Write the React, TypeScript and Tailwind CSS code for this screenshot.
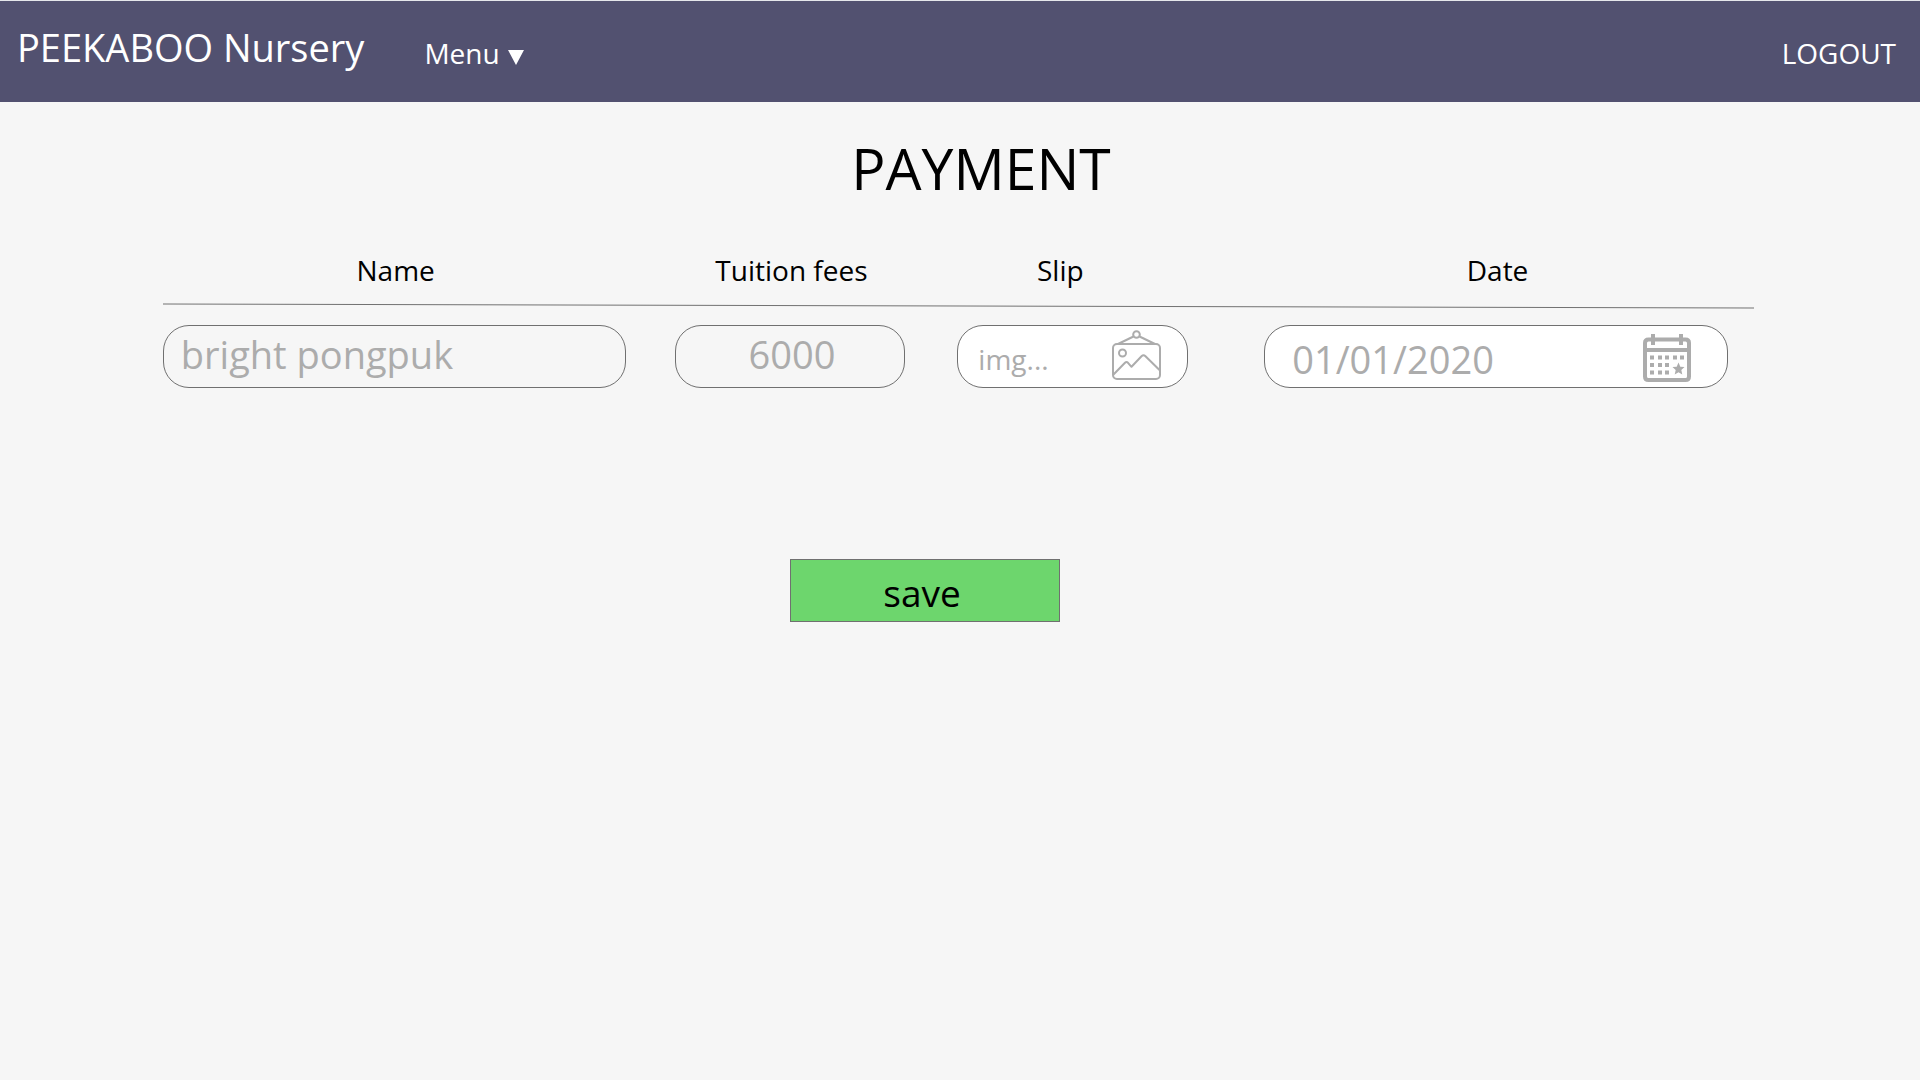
import { useState } from "react";

const field =
  "w-full h-[63px] rounded-[26px] border border-[#707070] text-[#acacac] text-[38px] outline-none";
const label = "row-start-1 pl-[3px] text-center text-[28px] leading-10 text-black";

function PictureIcon() {
  return (
    <svg
      width="50"
      height="50"
      viewBox="0 0 50 50"
      fill="none"
      stroke="currentColor"
      strokeWidth="2"
      strokeLinejoin="round"
      aria-hidden="true"
    >
      <rect x="1" y="14" width="47" height="35" rx="4" />
      <circle cx="24.5" cy="4.5" r="3.3" />
      <path d="M21.5 6.5 6 14M27.5 6.5 43 14" />
      <circle cx="10.5" cy="23" r="3.5" />
      <path d="M1.5 44.5 13 32.8q1.500-1.500 3 0l3.500 4 10-10.500q2-2 4 0L48 40.500" />
    </svg>
  );
}

function CalendarIcon() {
  return (
    <svg width="48" height="48" viewBox="0 0 48 48" fill="currentColor" aria-hidden="true">
      <path
        d="M8 5.500H5.500Q2 5.500 2 9v33.500Q2 46 5.500 46h37q3.500 0 3.500-3.500V9q0-3.500-3.500-3.500H40M8 5.500h32M2 16h44M10 0v11M38 0v11"
        fill="none"
        stroke="currentColor"
        strokeWidth="4"
      />
      <path d="M7 21.500h4v4H7zM15 21.500h4v4h-4zM22 21.500h4v4h-4zM30 21.500h4v4h-4zM37 21.500h4v4h-4zM7 29h4v4H7zM15 29h4v4h-4zM22 29h4v4h-4zM7 36.500h4v4H7zM15 36.500h4v4h-4zM22 36.500h4v4h-4z" />
      <path d="m35.500 28.500 1.800 4.200 4.200.3-3.200 3 1 4.500-3.800-2.300-3.800 2.300 1-4.500-3.200-3 4.200-.3z" />
    </svg>
  );
}

export default function App() {
  const [name, setName] = useState("bright pongpuk");
  const [fees, setFees] = useState("6000");
  const [slip, setSlip] = useState("img...");
  const [date, setDate] = useState("01/01/2020");

  return (
    <div className="min-h-screen bg-[#f6f6f6] font-['Open_Sans',sans-serif]">
      <header className="flex h-[102px] items-start border-t border-gray-200 bg-[#525170] pl-[17px] pr-6 text-white">
        <a href="#" className="pt-5 text-[38px] leading-[52px]">
          PEEKABOO Nursery
        </a>
        <button type="button" className="ml-[60px] flex items-center gap-2 pt-8 text-[28px] leading-10">
          Menu
          <svg width="16" height="15" viewBox="0 0 16 15" className="mt-2" fill="currentColor" aria-hidden="true">
            <path d="M0 0h16L8 15z" />
          </svg>
        </button>
        <a href="#" className="ml-auto pt-8 text-[28px] leading-10">
          LOGOUT
        </a>
      </header>

      <main>
        <h1 className="pl-[42px] pt-6 text-center text-[57px] leading-[84px] text-black">PAYMENT</h1>

        <form onSubmit={(e) => e.preventDefault()}>
          <div className="ml-[8.48%] mr-[8.65%] mt-10 grid grid-cols-[463fr_49fr_231fr_52fr_231fr_76fr_464fr_26fr]">
            <label htmlFor="name" className={`${label} col-start-1`}>Name</label>
            <label htmlFor="fees" className={`${label} col-start-3`}>Tuition fees</label>
            <label htmlFor="slip" className={`${label} col-start-5 pr-7`}>Slip</label>
            <label htmlFor="date" className={`${label} col-start-7`}>Date</label>

            <svg
              className="col-span-full row-start-2 mt-[13px] h-[6px] w-full"
              viewBox="0 0 1592 6"
              preserveAspectRatio="none"
              aria-hidden="true"
            >
              <path d="M0 1 1592 5" stroke="#707070" fill="none" />
            </svg>

            <div className="col-start-1 row-start-3 mt-4">
              <input
                id="name"
                className={`${field} pb-[6px] pl-[17px] pr-4`}
                value={name}
                onChange={(e) => setName(e.target.value)}
              />
            </div>
            <div className="col-start-3 row-start-3 mt-4">
              <input
                id="fees"
                className={`${field} pb-[6px] pl-4 pr-3 text-center`}
                value={fees}
                onChange={(e) => setFees(e.target.value)}
              />
            </div>
            <div className="col-start-5 row-start-3 mt-4">
              <div className={`${field} flex items-center bg-white pl-5 pr-[25px]`}>
                <input
                  id="slip"
                  className="w-0 flex-1 pt-1 text-[28px] outline-none"
                  value={slip}
                  onChange={(e) => setSlip(e.target.value)}
                />
                <button type="button" aria-label="Choose image" className="pb-1">
                  <PictureIcon />
                </button>
              </div>
            </div>
            <div className="col-start-7 row-start-3 mt-4">
              <div className={`${field} flex items-center bg-white pl-[27px] pr-9`}>
                <input
                  id="date"
                  className="w-0 flex-1 pt-[6px] outline-none"
                  value={date}
                  onChange={(e) => setDate(e.target.value)}
                />
                <button type="button" aria-label="Choose date" className="pt-[2px]">
                  <CalendarIcon />
                </button>
              </div>
            </div>
          </div>

          <div className="mt-[171px] flex justify-center pr-[70px]">
            <button
              type="submit"
              className="h-[63px] w-[270px] border border-[#707070] bg-[#6dd66d] pr-[6px] pt-1 text-[37px] leading-[52px] text-black"
            >
              save
            </button>
          </div>
        </form>
      </main>
    </div>
  );
}
